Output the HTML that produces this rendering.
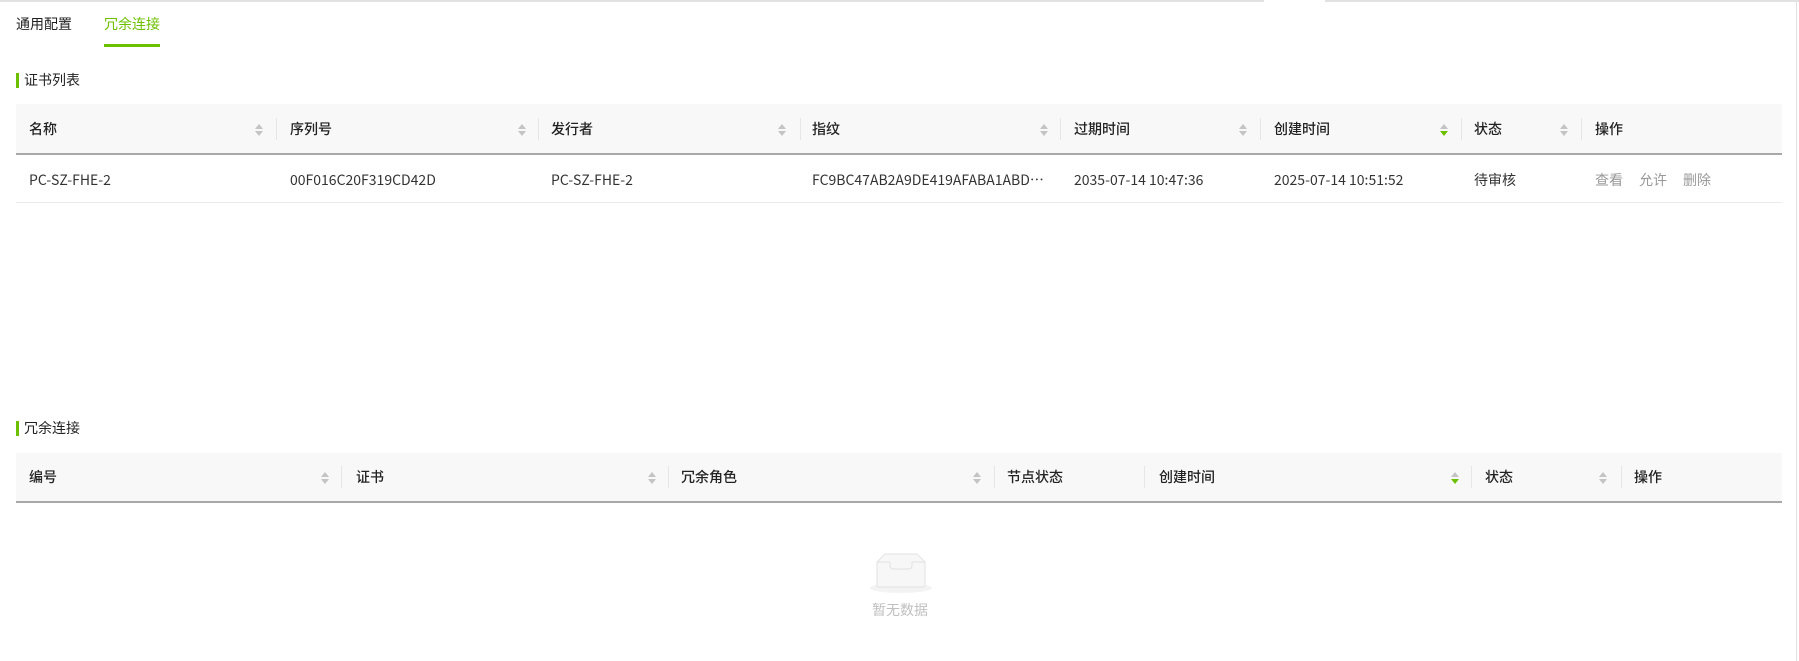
<!DOCTYPE html>
<html><head><meta charset="utf-8"><style>
*{margin:0;padding:0;box-sizing:border-box}
body{width:1799px;height:661px;background:#fff;font-family:"Noto Sans CJK SC","Liberation Sans",sans-serif;font-size:14px;color:#333;position:relative;overflow:hidden}
.a{position:absolute;white-space:nowrap;line-height:20px}
.sort{position:absolute;width:8px;height:12px}
.sort:before{content:"";position:absolute;left:0;top:0;border:4px solid transparent;border-bottom:5px solid #c4c4c4;border-top:0}
.sort:after{content:"";position:absolute;left:0;top:7px;border:4px solid transparent;border-top:5px solid #c4c4c4;border-bottom:0}
.sort.g:after{border-top-color:#6cc000}
.sep{position:absolute;width:1px;height:22px;background:#e6e6e6}
.hd{font-weight:500;color:#222}
</style></head><body>
<div class="a" style="left:0;top:0;width:1264px;height:2px;background:#e2e2e2"></div>
<div class="a" style="left:1325px;top:0;width:474px;height:2px;background:#e2e2e2"></div>
<div class="a" style="left:1796px;top:0;width:1px;height:661px;background:#e2e2e2"></div>

<div class="a" style="left:16px;top:14px;color:#222">通用配置</div>
<div class="a" style="left:104px;top:14px;color:#6cc000">冗余连接</div>
<div class="a" style="left:104px;top:44px;width:56px;height:3px;background:#6cc000"></div>

<div class="a" style="left:16px;top:73px;width:3px;height:15px;background:#6cc000"></div>
<div class="a" style="left:24px;top:70px;color:#222">证书列表</div>

<div class="a" style="left:16px;top:104px;width:1766px;height:49px;background:#f8f8f8"></div>
<div class="a" style="left:16px;top:153px;width:1766px;height:2px;background:#a8a8a8"></div>
<div class="a" style="left:16px;top:202px;width:1766px;height:1px;background:#ececec"></div>

<div class="a hd" style="left:29px;top:119px">名称</div>
<div class="a hd" style="left:290px;top:119px">序列号</div>
<div class="a hd" style="left:551px;top:119px">发行者</div>
<div class="a hd" style="left:812px;top:119px">指纹</div>
<div class="a hd" style="left:1074px;top:119px">过期时间</div>
<div class="a hd" style="left:1274px;top:119px">创建时间</div>
<div class="a hd" style="left:1474px;top:119px">状态</div>
<div class="a hd" style="left:1595px;top:119px">操作</div>
<div class="sort" style="left:255px;top:124px"></div>
<div class="sort" style="left:518px;top:124px"></div>
<div class="sort" style="left:778px;top:124px"></div>
<div class="sort" style="left:1040px;top:124px"></div>
<div class="sort" style="left:1239px;top:124px"></div>
<div class="sort g" style="left:1440px;top:124px"></div>
<div class="sort" style="left:1560px;top:124px"></div>
<div class="sep" style="left:276px;top:118px"></div>
<div class="sep" style="left:538px;top:118px"></div>
<div class="sep" style="left:800px;top:118px"></div>
<div class="sep" style="left:1060px;top:118px"></div>
<div class="sep" style="left:1260px;top:118px"></div>
<div class="sep" style="left:1461px;top:118px"></div>
<div class="sep" style="left:1581px;top:118px"></div>

<div class="a" style="left:29px;top:170px">PC-SZ-FHE-2</div>
<div class="a" style="left:290px;top:170px">00F016C20F319CD42D</div>
<div class="a" style="left:551px;top:170px">PC-SZ-FHE-2</div>
<div class="a" style="left:812px;top:170px;width:236px;overflow:hidden;text-overflow:ellipsis">FC9BC47AB2A9DE419AFABA1ABD6E2F7C</div>
<div class="a" style="left:1074px;top:170px">2035-07-14 10:47:36</div>
<div class="a" style="left:1274px;top:170px">2025-07-14 10:51:52</div>
<div class="a" style="left:1474px;top:170px">待审核</div>
<div class="a" style="left:1595px;top:170px;color:#999">查看</div>
<div class="a" style="left:1639px;top:170px;color:#999">允许</div>
<div class="a" style="left:1683px;top:170px;color:#999">删除</div>

<div class="a" style="left:16px;top:421px;width:3px;height:15px;background:#6cc000"></div>
<div class="a" style="left:24px;top:418px;color:#222">冗余连接</div>

<div class="a" style="left:16px;top:453px;width:1766px;height:48px;background:#f8f8f8"></div>
<div class="a" style="left:16px;top:501px;width:1766px;height:2px;background:#a8a8a8"></div>
<div class="a hd" style="left:29px;top:467px">编号</div>
<div class="a hd" style="left:356px;top:467px">证书</div>
<div class="a hd" style="left:681px;top:467px">冗余角色</div>
<div class="a hd" style="left:1007px;top:467px">节点状态</div>
<div class="a hd" style="left:1159px;top:467px">创建时间</div>
<div class="a hd" style="left:1485px;top:467px">状态</div>
<div class="a hd" style="left:1634px;top:467px">操作</div>
<div class="sort" style="left:321px;top:472px"></div>
<div class="sort" style="left:648px;top:472px"></div>
<div class="sort" style="left:973px;top:472px"></div>
<div class="sort g" style="left:1451px;top:472px"></div>
<div class="sort" style="left:1599px;top:472px"></div>
<div class="sep" style="left:341px;top:466px"></div>
<div class="sep" style="left:668px;top:466px"></div>
<div class="sep" style="left:994px;top:466px"></div>
<div class="sep" style="left:1144px;top:466px"></div>
<div class="sep" style="left:1471px;top:466px"></div>
<div class="sep" style="left:1621px;top:466px"></div>

<svg class="a" style="left:868px;top:551px" width="66" height="44" viewBox="0 0 66 44">
<ellipse cx="33" cy="37" rx="31" ry="5" fill="#f3f3f3"/>
<path d="M9 11 L17 3 H49 L57 11 V34 a2 2 0 0 1 -2 2 H11 a2 2 0 0 1 -2 -2 Z" fill="#f7f7f7" stroke="#e2e2e2" stroke-width="1"/>
<path d="M9 11 H22 V15 a3 3 0 0 0 3 3 H41 a3 3 0 0 0 3 -3 V11 H57" fill="none" stroke="#e2e2e2" stroke-width="1"/>
</svg>
<div class="a" style="left:872px;top:600px;color:#c0c0c0">暂无数据</div>
</body></html>
